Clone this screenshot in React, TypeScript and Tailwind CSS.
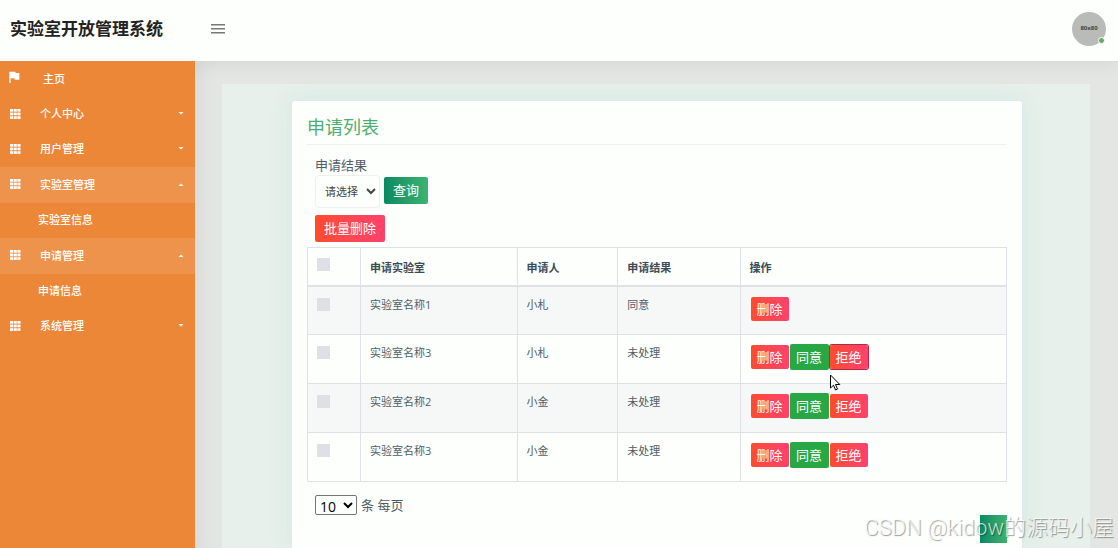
import React, { useState } from 'react';
import { clsx } from 'clsx';
import { MdFlag } from 'react-icons/md';

interface MenuItem {
  label: string;
  child?: string;
}

interface Application {
  id: number;
  lab: string;
  applicant: string;
  result: string;
}

const MENU: MenuItem[] = [
  { label: '个人中心' },
  { label: '用户管理' },
  { label: '实验室管理', child: '实验室信息' },
  { label: '申请管理', child: '申请信息' },
  { label: '系统管理' },
];

const APPLICATIONS: Application[] = [
  { id: 1, lab: '实验室名称1', applicant: '小札', result: '同意' },
  { id: 2, lab: '实验室名称3', applicant: '小札', result: '未处理' },
  { id: 3, lab: '实验室名称2', applicant: '小金', result: '未处理' },
  { id: 4, lab: '实验室名称3', applicant: '小金', result: '未处理' },
];

function GridIcon() {
  return (
    <svg width="11" height="10" viewBox="0 0 11 10" fill="currentColor" aria-hidden="true">
      {[0, 3.7, 7.4].map(x =>
        [0, 3.6, 7.2].map(y => <rect key={`${x}-${y}`} x={x} y={y} width="3.1" height="2.7" />)
      )}
    </svg>
  );
}

function Caret({ up }: { up: boolean }) {
  return (
    <svg width="6" height="3" viewBox="0 0 6 3" fill="currentColor" aria-hidden="true">
      <path d={up ? 'M.5 3h5L3 .5z' : 'M.5 0h5L3 2.5z'} />
    </svg>
  );
}

function Sidebar() {
  const [open, setOpen] = useState<string[]>(['实验室管理', '申请管理']);

  const toggle = (label: string) => {
    setOpen(open.includes(label) ? open.filter(l => l !== label) : [...open, label]);
  };

  return (
    <nav className="relative z-10 w-[195px] shrink-0 bg-[#ec8737] text-[11px] font-medium text-white">
      <a href="#home" className="flex h-9 items-center pl-1.5">
        <MdFlag size={16} className="mb-1" />
        <span className="ml-[21px]">主页</span>
      </a>
      {MENU.map(item => {
        const isOpen = open.includes(item.label);
        return (
          <div key={item.label}>
            <button
              type="button"
              onClick={() => toggle(item.label)}
              className={clsx(
                'flex w-full items-center pl-2.5 pr-[11px]',
                isOpen ? 'h-9 bg-[#ee934b]' : 'h-[35px]'
              )}
            >
              <span className="mb-0.5">
                <GridIcon />
              </span>
              <span className="ml-[19px] flex-1 text-left">{item.label}</span>
              <span className="mb-0.5">
                <Caret up={isOpen} />
              </span>
            </button>
            {isOpen && item.child && (
              <a href="#list" className="flex h-[35px] items-center pl-[38px]">
                {item.child}
              </a>
            )}
          </div>
        );
      })}
    </nav>
  );
}

function Header() {
  return (
    <header className="relative z-10 flex h-[61px] shrink-0 items-center bg-[#fcfffb] pb-1 pl-2.5 pr-3 shadow-[0_4px_20px_rgba(0,0,0,0.06)]">
      <h1 className="w-[201px] whitespace-nowrap text-[17px] font-bold text-[#222]">实验室开放管理系统</h1>
      <button type="button" aria-label="Menu" className="flex w-3.5 flex-col gap-[3px]">
        <span className="h-px w-full bg-[#777] shadow-[0_1px_0_#bbb]" />
        <span className="h-px w-full bg-[#777] shadow-[0_1px_0_#bbb]" />
        <span className="h-px w-full bg-[#777] shadow-[0_1px_0_#bbb]" />
      </button>
      <div className="relative ml-auto flex size-[34px] items-center justify-center rounded-full bg-[#b9bbb8] text-[6px] font-bold text-[#444]">
        80x80
        <span className="absolute bottom-0.5 right-px size-[7px] rounded-full border border-[#fcfffb] bg-[#68a868]" />
      </div>
    </header>
  );
}

function Check({ label }: { label: string }) {
  return (
    <input
      type="checkbox"
      aria-label={label}
      className="block size-[13px] appearance-none bg-[#dde1e5] checked:bg-[#2d9f68]"
    />
  );
}

function RedButton({ children, focused }: { children: React.ReactNode; focused?: boolean }) {
  return (
    <button
      type="button"
      className={clsx(
        'h-6 w-[38px] rounded-xs bg-linear-to-r from-[#ff4b2b] to-[#ff416c] text-white',
        focused && 'ring-1 ring-[#b02a45]'
      )}
    >
      {children}
    </button>
  );
}

function ApplicationTable() {
  return (
    <table className="w-full table-fixed border-collapse text-left text-[11px] leading-4 text-[#4f5d69] [&_td]:border [&_td]:border-[#dee2e6] [&_td]:px-[9px] [&_td]:align-top [&_th]:border [&_th]:border-b-2 [&_th]:border-[#dee2e6] [&_th]:px-[9px]">
      <thead>
        <tr className="h-[38px] text-[#3c4b58]">
          <th className="w-[53px] pb-1">
            <Check label="全选" />
          </th>
          <th className="w-[22.4%] pt-1">申请实验室</th>
          <th className="w-[14.4%] pt-1">申请人</th>
          <th className="w-[17.5%] pt-1">申请结果</th>
          <th className="pt-1">操作</th>
        </tr>
      </thead>
      <tbody>
        {APPLICATIONS.map(row => (
          <tr key={row.id} className="h-[49px] odd:bg-[#f6f8f8]">
            <td className="pt-[11px]">
              <Check label={row.lab} />
            </td>
            <td className="pt-2.5">{row.lab}</td>
            <td className="pt-2.5">{row.applicant}</td>
            <td className="pt-2.5">{row.result}</td>
            <td className="pt-2.5">
              <div className="flex items-center gap-px pl-px text-[13px]">
                <RedButton>删除</RedButton>
                {row.result === '未处理' && (
                  <>
                    <button type="button" className="-my-px h-[26px] w-[39px] rounded-xs bg-[#28a745] text-white">
                      同意
                    </button>
                    <RedButton focused={row.id === 2}>拒绝</RedButton>
                  </>
                )}
              </div>
            </td>
          </tr>
        ))}
      </tbody>
    </table>
  );
}

export default function App() {
  return (
    <div className="relative flex min-h-screen flex-col overflow-hidden bg-[#e4e6e3] font-['Open_Sans','Noto_Sans_CJK_SC',sans-serif] text-[13px] text-[#4f5d69]">
      <Header />
      <div className="flex flex-1">
        <Sidebar />
        <main className="flex flex-1 flex-col pl-[27px] pr-7 pt-[23px] shadow-[inset_16px_0_20px_-12px_rgba(0,0,0,0.06)]">
          <div className="flex flex-1 flex-col bg-[#e7f0eb] pl-[69px] pr-[67px] pt-4">
            <section className="flex-1 rounded-t-sm border border-b-0 border-[#dfeaed] bg-[#fcfffb] px-[15px] pt-3 shadow-[0_0_20px_rgba(160,215,215,0.3)]">
              <h2 className="border-b border-[#edf0ee] pb-[3px] text-[18px] leading-7 text-[#4cae70]">申请列表</h2>

              <div className="px-2 pt-[11px]">
                <label htmlFor="result" className="block leading-[19px]">
                  申请结果
                </label>
                <div className="flex items-center gap-1">
                  <select
                    id="result"
                    className="h-[33px] w-[65px] rounded-sm border border-[#edf0ee] bg-[#fcfffb] pl-[5px] text-[11px] text-[#444]"
                  >
                    <option>请选择</option>
                    <option>同意</option>
                    <option>未处理</option>
                  </select>
                  <button
                    type="button"
                    className="mb-0.5 h-[27px] w-11 rounded-xs bg-linear-to-r from-[#058a62] to-[#3cb371] text-white"
                  >
                    查询
                  </button>
                </div>
                <button
                  type="button"
                  className="mb-[5px] mt-[7px] block h-[27px] w-[70px] rounded-xs bg-linear-to-r from-[#ff4b2b] to-[#ff416c] text-white"
                >
                  批量删除
                </button>
              </div>

              <ApplicationTable />

              <div className="flex items-center gap-1 px-2 pt-[13px]">
                <select
                  id="page-size"
                  className="h-5 w-[42px] rounded-xs border border-[#767676] bg-[#fcfffb] text-[14px] leading-4 text-black"
                >
                  <option>10</option>
                  <option>20</option>
                </select>
                <label htmlFor="page-size" className="leading-5">条 每页</label>
              </div>
              <div className="flex justify-end">
                <button
                  type="button"
                  aria-label="1"
                  className="h-7 w-[27px] bg-linear-to-r from-[#058a62] to-[#3cb371]"
                />
              </div>
            </section>
          </div>
        </main>
      </div>

      <div className="pointer-events-none absolute bottom-1 right-1 z-20 whitespace-nowrap font-['Roboto','Noto_Sans_CJK_SC',sans-serif] text-[22px] font-light leading-8 text-white/75 [text-shadow:1px_1px_1px_rgba(0,0,0,0.4)]">
        CSDN @kidow的源码小屋
      </div>

      {/* mouse pointer */}
      <svg className="pointer-events-none absolute left-[830px] top-[374px] z-20" width="11" height="17" viewBox="0 0 11 17" aria-hidden="true">
        <path d="M.5 1v13l3-2.8 2 4.8 2-.9-2-4.6h4.3z" fill="#fff" stroke="#000" />
      </svg>
    </div>
  );
}
